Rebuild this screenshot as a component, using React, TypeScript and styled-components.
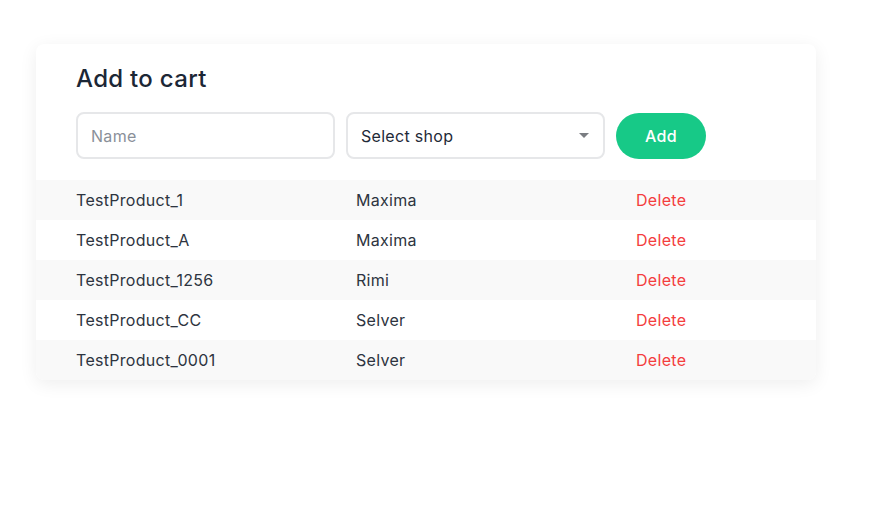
import { FC } from "react";
import styled, { createGlobalStyle } from "styled-components";

const GlobalStyle = createGlobalStyle`
  body {
    margin: 0;
    background: #ffffff;
    font-family: Inter, "Open Sans", sans-serif;
    color: #2d3440;
  }
`;

const Page = styled.div`
  padding: 44px 36px;
`;

const Card = styled.div`
  width: 780px;
  background: #ffffff;
  border-radius: 8px;
  box-shadow: 0 4px 18px rgba(0, 0, 0, 0.07);
  overflow: hidden;
`;

const Header = styled.div`
  padding: 21px 40px 21px;
`;

const Title = styled.h2`
  margin: 0 0 19px;
  font-size: 24px;
  font-weight: 500;
  line-height: 28px;
  letter-spacing: 0.3px;
  color: #1c2736;
`;

const Form = styled.div`
  display: flex;
  align-items: center;
  gap: 11px;
`;

const Field = styled.input`
  box-sizing: border-box;
  width: 259px;
  height: 47px;
  border: 2px solid #e6e7e9;
  border-radius: 8px;
  padding: 0 13px;
  font-family: inherit;
  font-size: 16px;
  letter-spacing: 0.3px;
  color: #2d3440;
  outline: none;
  &::placeholder {
    color: #8a9099;
  }
`;

const SelectBox = styled.div`
  box-sizing: border-box;
  width: 259px;
  height: 47px;
  border: 2px solid #e6e7e9;
  border-radius: 8px;
  padding: 0 14px 0 13px;
  display: flex;
  align-items: center;
  justify-content: space-between;
  font-size: 16px;
  letter-spacing: 0.3px;
  color: #1f2a38;
`;

const Caret = styled.span`
  width: 0;
  height: 0;
  border-left: 5px solid transparent;
  border-right: 5px solid transparent;
  border-top: 5px solid #7a7d82;
`;

const AddButton = styled.button`
  width: 90px;
  height: 46px;
  border: none;
  border-radius: 23px;
  background: #17c987;
  color: #ffffff;
  font-family: inherit;
  font-size: 16px;
  font-weight: 500;
  letter-spacing: 0.3px;
`;

const Row = styled.div<{ $shaded: boolean }>`
  display: grid;
  grid-template-columns: 280px 280px 1fr;
  align-items: center;
  height: 40px;
  padding-left: 40px;
  background: ${(p) => (p.$shaded ? "#f9f9f9" : "#ffffff")};
  font-size: 16px;
  letter-spacing: 0.3px;
  color: #2d3440;
`;

const DeleteLink = styled.span`
  color: #f43d3d;
`;

const items = [
  { name: "TestProduct_1", shop: "Maxima" },
  { name: "TestProduct_A", shop: "Maxima" },
  { name: "TestProduct_1256", shop: "Rimi" },
  { name: "TestProduct_CC", shop: "Selver" },
  { name: "TestProduct_0001", shop: "Selver" },
];

const App: FC = () => {
  return (
    <>
      <GlobalStyle />
      <Page>
        <Card>
          <Header>
            <Title>Add to cart</Title>
            <Form>
              <Field placeholder="Name" />
              <SelectBox>
                <span>Select shop</span>
                <Caret />
              </SelectBox>
              <AddButton>Add</AddButton>
            </Form>
          </Header>
          {items.map((item, i) => (
            <Row key={item.name} $shaded={i % 2 === 0}>
              <span>{item.name}</span>
              <span>{item.shop}</span>
              <DeleteLink>Delete</DeleteLink>
            </Row>
          ))}
        </Card>
      </Page>
    </>
  );
};

export default App;
